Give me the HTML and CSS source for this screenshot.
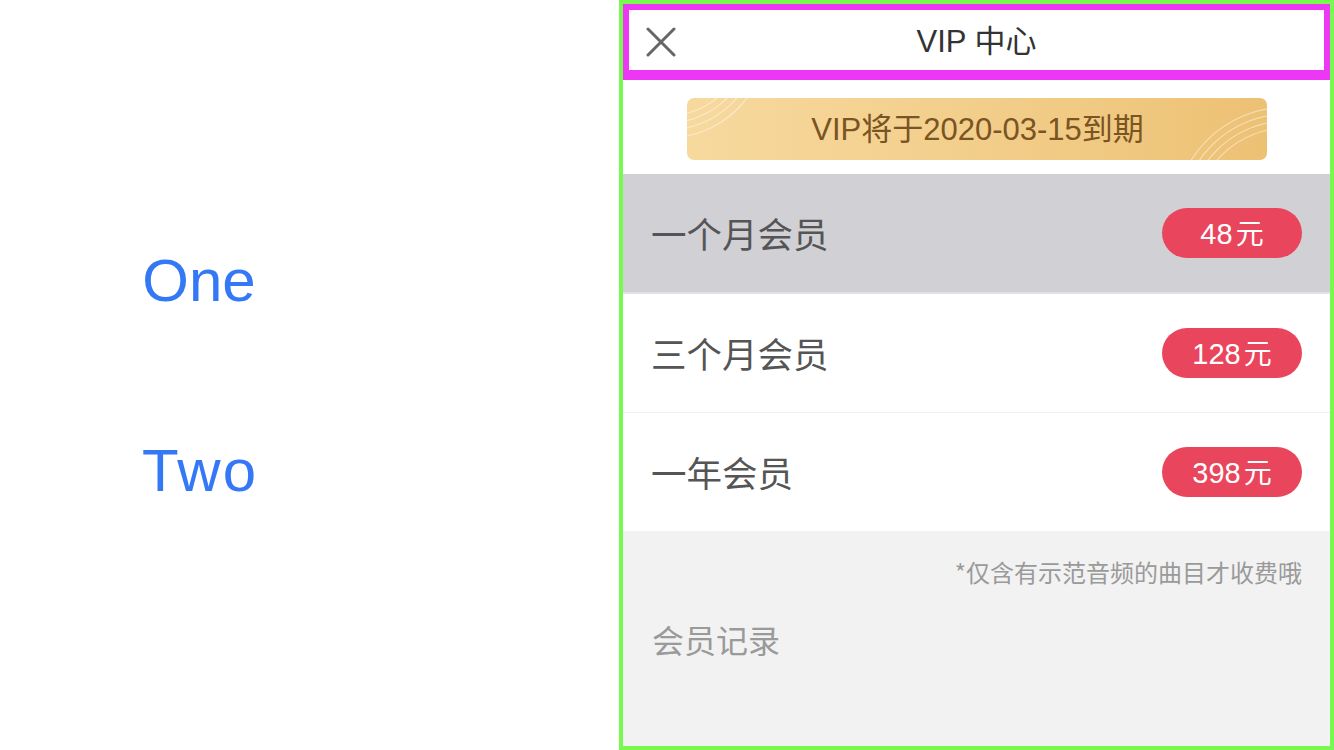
FILE: index.html
```html
<!DOCTYPE html>
<html lang="zh">
<head>
<meta charset="utf-8">
<title>VIP 中心</title>
<link rel="stylesheet" href="styles.css">
</head>
<body>
<div class="page">
  <section class="left">
    <div class="tabs">
      <div class="tab">One</div>
      <div class="tab">Two</div>
    </div>
  </section>
  <section class="phone">
    <header class="nav">
      <span class="close">
        <svg width="30" height="30" viewBox="0 0 30 30"><path d="M2 2 L28 28 M28 2 L2 28" stroke="#666" stroke-width="3" stroke-linecap="round" fill="none"/></svg>
      </span>
      <h1 class="title">VIP 中心</h1>
    </header>
    <div class="banner-wrap">
      <div class="banner">
        <svg class="arcs arcs-tl" width="120" height="62" viewBox="0 0 120 62">
          <g fill="none" stroke="rgba(255,255,255,0.45)" stroke-width="1.2">
            <circle cx="-20" cy="-60" r="78"/>
            <circle cx="-20" cy="-60" r="85"/>
            <circle cx="-20" cy="-60" r="92"/>
            <circle cx="-20" cy="-60" r="100"/>
          </g>
        </svg>
        <span class="banner-text">VIP将于2020-03-15到期</span>
        <svg class="arcs arcs-br" width="120" height="62" viewBox="0 0 120 62">
          <g fill="none" stroke="rgba(255,255,255,0.45)" stroke-width="1.2">
            <circle cx="140" cy="122" r="92"/>
            <circle cx="140" cy="122" r="99"/>
            <circle cx="140" cy="122" r="106"/>
            <circle cx="140" cy="122" r="113"/>
          </g>
        </svg>
      </div>
    </div>
    <ul class="plans">
      <li class="plan active"><span class="plan-name">一个月会员</span><span class="price">48<span class="unit">元</span></span></li>
      <li class="plan"><span class="plan-name">三个月会员</span><span class="price">128<span class="unit">元</span></span></li>
      <li class="plan"><span class="plan-name">一年会员</span><span class="price">398<span class="unit">元</span></span></li>
    </ul>
    <div class="footer">
      <p class="note">*仅含有示范音频的曲目才收费哦</p>
      <p class="records">会员记录</p>
    </div>
  </section>
</div>
</body>
</html>
```
FILE: styles.css
```css
* { box-sizing: border-box; }
html, body { margin: 0; padding: 0; background: #fff; }
body { font-family: "Liberation Sans", "Noto Sans CJK SC", sans-serif; }

.page {
  display: flex;
  width: 1334px;
  height: 750px;
}

.left {
  width: 619px;
  flex: none;
}
.tabs {
  width: 398px;
  display: flex;
  flex-direction: column;
  align-items: center;
  padding-top: 246px;
  gap: 120px;
}
.tab {
  font-size: 60px;
  line-height: 70px;
  color: #3478f6;
}
.tab + .tab { letter-spacing: 2px; padding-left: 2px; }

.phone {
  width: 715px;
  height: 750px;
  border: 4px solid #77fa50;
  display: flex;
  flex-direction: column;
  background: #fff;
}

.nav {
  height: 76px;
  flex: none;
  border: 6px solid #ee37f5;
  border-bottom-width: 10px;
  background: #fff;
  display: flex;
  align-items: center;
  position: relative;
}
.close {
  position: absolute;
  left: 17px;
  top: 17px;
  width: 30px;
  height: 30px;
  display: flex;
}
.title {
  flex: 1;
  margin: 0;
  padding-top: 4px;
  text-align: center;
  font-weight: normal;
  font-size: 31px;
  line-height: 34px;
  color: #333;
}

.banner-wrap {
  flex: none;
  padding: 18px 63px 14px 64px;
  background: #fff;
}
.banner {
  position: relative;
  height: 62px;
  border-radius: 7px;
  background: linear-gradient(90deg, #f7d99e 0%, #f2cd89 55%, #edc174 100%);
  display: flex;
  align-items: center;
  justify-content: center;
  overflow: hidden;
}
.banner-text {
  font-size: 31px;
  color: #7a5422;
  line-height: 34px;
  padding-left: 1px;
  padding-top: 2px;
}
.arcs { position: absolute; }
.arcs-tl { left: 0; top: 0; }
.arcs-br { right: 0; bottom: 0; }

.plans {
  list-style: none;
  margin: 0;
  padding: 0;
  flex: none;
}
.plan {
  height: 119px;
  display: flex;
  align-items: center;
  justify-content: space-between;
  padding: 0 28px 0 28px;
  background: #fff;
  border-bottom: 1px solid #efefef;
}
.plan.active {
  background: #d1d0d5;
  border-bottom: 2px solid #e2e2e4;
  height: 120px;
}
.plan:last-child { border-bottom: none; height: 118px; }
.plan-name {
  font-family: "Noto Sans CJK SC", sans-serif;
  font-size: 35.5px;
  line-height: 40px;
  color: #555;
}
.price {
  display: block;
  width: 140px;
  height: 50px;
  border-radius: 25px;
  background: #e9455c;
  color: #fff;
  font-size: 29px;
  line-height: 52px;
  text-align: center;
}
.unit { margin-left: 3px; font-size: 28px; }

.footer {
  flex: 1;
  background: #f2f2f2;
  padding: 26px 28px 0 29px;
}
.note {
  margin: 0;
  text-align: right;
  font-family: "Noto Sans CJK SC", sans-serif;
  font-size: 24px;
  line-height: 30px;
  color: #9a9a9a;
}
.records {
  margin: 33px 0 0;
  font-family: "Noto Sans CJK SC", sans-serif;
  font-size: 32px;
  line-height: 38px;
  color: #9a9a9a;
}
```
